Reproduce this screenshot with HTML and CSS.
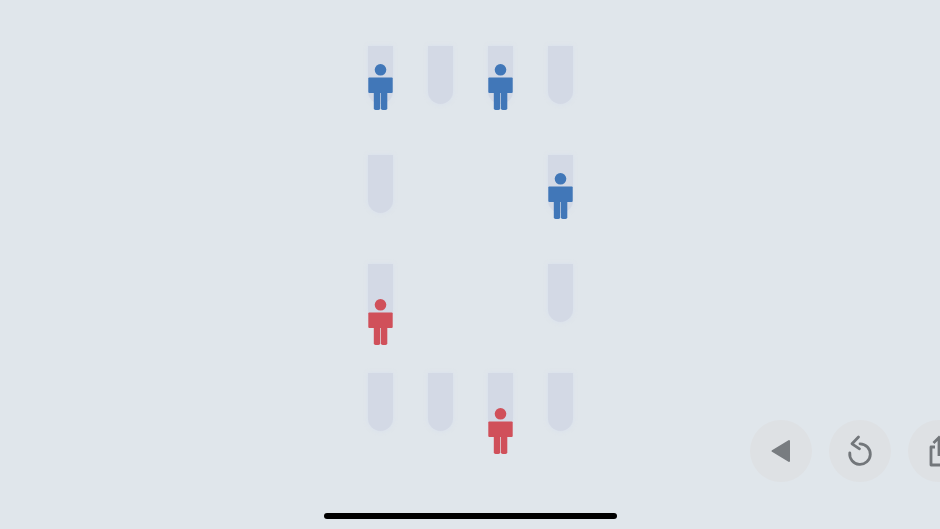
FILE: index.html
```html
<!DOCTYPE html>
<html lang="en">
<head>
  <meta charset="UTF-8">
  <meta name="viewport" content="width=device-width, initial-scale=1.0">
  <title>Seat puzzle</title>
  <link rel="stylesheet" href="styles.css">
</head>
<body>
  <svg class="defs" width="0" height="0">
    <symbol id="person" viewBox="0 0 25 46">
      <circle cx="12.5" cy="5.8" r="5.8"/>
      <rect x="0.3" y="13.5" width="24.4" height="15.5" rx="1"/>
      <rect x="5.8" y="27" width="6.4" height="19" rx="1.8"/>
      <rect x="12.9" y="27" width="6.4" height="19" rx="1.8"/>
    </symbol>
  </svg>

  <div class="stage">
    <div class="board">
      <div class="slot"><svg class="person blue top"><use href="#person"/></svg></div>
      <div class="slot"></div>
      <div class="slot"><svg class="person blue top"><use href="#person"/></svg></div>
      <div class="slot"></div>

      <div class="slot"></div>
      <div class="slot empty"></div>
      <div class="slot empty"></div>
      <div class="slot"><svg class="person blue top"><use href="#person"/></svg></div>

      <div class="slot"><svg class="person red low"><use href="#person"/></svg></div>
      <div class="slot empty"></div>
      <div class="slot empty"></div>
      <div class="slot"></div>

      <div class="slot"></div>
      <div class="slot"></div>
      <div class="slot"><svg class="person red low"><use href="#person"/></svg></div>
      <div class="slot"></div>
    </div>

    <div class="controls">
      <button class="round-btn" aria-label="Back">
        <svg width="24" height="26" viewBox="0 0 24 26"><path d="M3.5 13 20 3v20z" fill="#787c80" stroke="#787c80" stroke-width="2" stroke-linejoin="round"/></svg>
      </button>
      <button class="round-btn" aria-label="Restart">
        <svg width="30" height="34" viewBox="0 0 30 34"><path d="M15 9.8a10.3 10.3 0 1 1-10.2 9" fill="none" stroke="#72767a" stroke-width="2.8" stroke-linecap="round"/><path d="M13.5 3 7 9.8l7.5 5" fill="none" stroke="#72767a" stroke-width="2.8" stroke-linecap="round" stroke-linejoin="round"/></svg>
      </button>
      <button class="round-btn" aria-label="Share">
        <svg width="30" height="34" viewBox="0 0 30 34"><path d="M11 13H7v18h16V13h-4" fill="none" stroke="#72767a" stroke-width="2.8" stroke-linejoin="round"/><path d="M15 22V4M9.5 9 15 3.5 20.5 9" fill="none" stroke="#72767a" stroke-width="2.8"/></svg>
      </button>
    </div>

    <div class="home-bar"></div>
  </div>
</body>
</html>
```

FILE: styles.css
```css
* {
  margin: 0;
  padding: 0;
  box-sizing: border-box;
}

body {
  height: 100vh;
  background: #e0e6eb;
  overflow: hidden;
}

.defs {
  position: absolute;
}

.stage {
  position: relative;
  height: 529px;
  overflow: hidden;
  padding-top: 46px;
}

.board {
  display: grid;
  grid-template-columns: repeat(4, 25px);
  grid-auto-rows: 58px;
  column-gap: 35px;
  row-gap: 51px;
  width: 205px;
  margin: 0 auto;
  filter: blur(0.5px);
}

.slot {
  position: relative;
  background: #d3d9e5;
  border-radius: 0 0 12.5px 12.5px;
  box-shadow: 0 0 5px rgba(214, 222, 238, 0.8);
}

.slot.empty {
  background: none;
  box-shadow: none;
}

.person {
  position: absolute;
  left: 0;
  width: 25px;
  height: 46px;
}

.person.top {
  top: 18px;
}

.person.low {
  top: 35px;
}

.blue {
  fill: #4177b8;
}

.red {
  fill: #d0505a;
}

.controls {
  position: absolute;
  left: 750px;
  top: 420px;
  display: flex;
  gap: 17px;
  filter: blur(0.6px);
}

.round-btn {
  flex: none;
  width: 62px;
  height: 62px;
  border: none;
  border-radius: 50%;
  background: #dee1e4;
  display: flex;
  justify-content: center;
  align-items: center;
}

.home-bar {
  position: absolute;
  left: 324px;
  top: 513px;
  width: 293px;
  height: 6px;
  border-radius: 3px;
  background: #000;
  filter: blur(0.4px);
}
```
